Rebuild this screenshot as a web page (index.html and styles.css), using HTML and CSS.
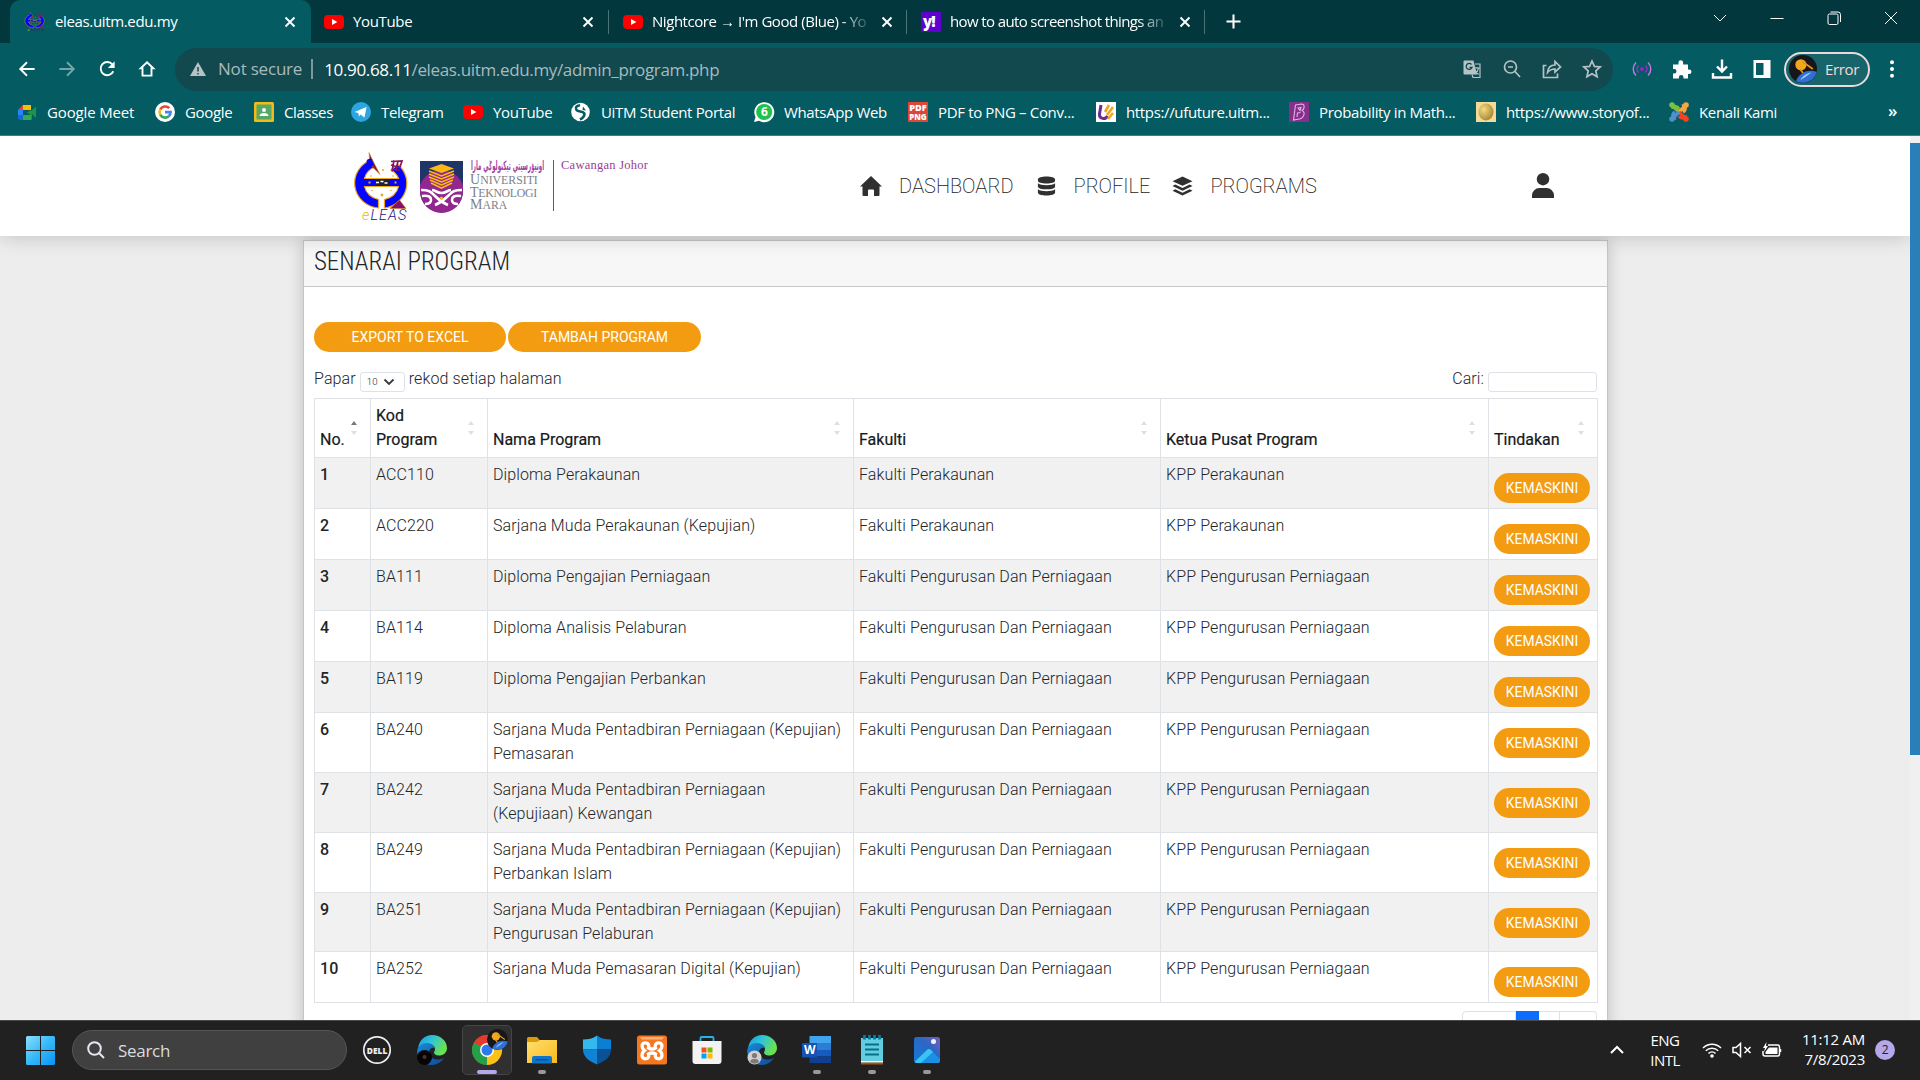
FILE: index.html
```html
<!DOCTYPE html>
<html lang="ms">
<head>
<meta charset="utf-8">
<title>eleas.uitm.edu.my</title>
<link rel="stylesheet" href="styles.css">
</head>
<body>
<svg class="defs" width="0" height="0">
  <defs>
    <linearGradient id="edge-a" x1="0" y1="0" x2="1" y2=".4"><stop offset="0" stop-color="#1a9be0"/><stop offset=".5" stop-color="#2fc4d8"/><stop offset="1" stop-color="#6ae24f"/></linearGradient>
    <linearGradient id="edge-b" x1="0" y1="0" x2="1" y2="1"><stop offset="0" stop-color="#1b8ad8"/><stop offset="1" stop-color="#0c4a98"/></linearGradient>
    <linearGradient id="win" x1="0" y1="0" x2="1" y2="1"><stop offset="0" stop-color="#8be0ff"/><stop offset=".5" stop-color="#35b9f8"/><stop offset="1" stop-color="#0a93f4"/></linearGradient>
    <linearGradient id="folder" x1="0" y1="0" x2="1" y2="1"><stop offset="0" stop-color="#ffdf70"/><stop offset="1" stop-color="#fab91a"/></linearGradient>
    <linearGradient id="photo" x1="0" y1="1" x2="1" y2="0"><stop offset="0" stop-color="#1479d8"/><stop offset=".6" stop-color="#2b67c4"/><stop offset="1" stop-color="#7a5cc0"/></linearGradient>
    <radialGradient id="egg" cx=".35" cy=".35" r=".8"><stop offset="0" stop-color="#f2dc80"/><stop offset="1" stop-color="#9b7a2c"/></radialGradient>
    <symbol id="yt" viewBox="0 0 20 20"><rect y="3" width="20" height="14" rx="4" fill="#f00"/><path d="M8 7l5.4 3L8 13z" fill="#fff"/></symbol>
    <symbol id="close" viewBox="0 0 12 12"><path d="M1.5 1.5l9 9M10.500 1.500l-9 9" stroke="#fff" stroke-width="1.9" fill="none"/></symbol>
    <g id="eleas">
      <path d="M17 7.500A26 25 0 0 0 23.500 56V47.500A17.500 16.500 0 0 1 9.500 34.500H43.500A17.500 16.500 0 0 1 29.500 47.500V56A26 25 0 0 0 43 12.500L36 18A17.500 16.500 0 0 1 43.500 26.500H9.500A17.500 16.500 0 0 1 20 15z" fill="#0505ff" stroke="#f0a818" stroke-width="1.200"/>
      <path d="M14 .5l3.500 7.500L25 22.500 15 12.500z" fill="#84104e" stroke="#d69122" stroke-width=".6"/>
      <path d="M11.500 9q1-3 5-2l2 5q-1 3-4 3-3-2-3-6z" fill="#0505ff"/>
      <path d="M36 9.500l11-.5-2 6M36 13l9.500 3M36.500 17l8.500 1.500M39 8.500l-2 11M43 9l-2 9" stroke="#84145e" stroke-width="1.700" fill="none"/>
      <path d="M44.500 48l6.500 8.500H35z" fill="#82106c" stroke="#c87a20" stroke-width=".6"/>
      <rect x="20" y="27.500" width="14" height="6" fill="#223"/><path d="M21 30.500h3m1.500-1h3m1 1.500h3" stroke="#fff" stroke-width="1.600"/>
      <g fill="#e9a927"><rect x="13.500" y="29.500" width="2" height="2"/><rect x="39.500" y="29.500" width="2" height="2"/><circle cx="27" cy="43" r="1.400"/><circle cx="17" cy="38.500" r=".8"/><circle cx="36" cy="38.500" r=".8"/><circle cx="16" cy="24" r=".8"/><circle cx="28" cy="18" r="1"/><circle cx="38" cy="24" r=".8"/></g>
      <text x="7" y="68" class="eleas-name"><tspan fill="#f2b31c">e</tspan>LEAS</text>
    </g>
    <symbol id="edge" viewBox="0 0 30 30">
      <path d="M1 13C2.500 5 8 0 15 0c8.500 0 15 6 15 13 0 5-4 7.500-8 7.500-3.500 0-5-1.500-5-3 0-1 1-1.500 1-3.500 0-3-3-5-6.500-5C6 9 3 11 1 13z" fill="url(#edge-a)"/>
      <path d="M.2 16C.5 11 5 8 10 8c4 0 7 2.500 8 5-2-1-6 0-6 4.500 0 5 5 7.500 10 7 2-.2 4-1 5-1.500C24.500 27 20 30 15 30 6.500 30 0 24 .2 16z" fill="url(#edge-b)"/>
    </symbol>
    <symbol id="planet" viewBox="0 0 20 20"><circle cx="10" cy="10" r="10" fill="#17171b"/><circle cx="8.500" cy="7" r="4" fill="#f0a81c"/><path d="M10 5l7 5M8 10l2 3" stroke="#e0941a" stroke-width="1.200"/><path d="M5 18.500C7 13 13 9.500 19.800 12A10 10 0 0 1 5 18.500z" fill="#2f6fd8"/><path d="M8 18c2-3.500 5-5 8-5.500l-4 3z" fill="#9fc4f2"/></symbol>
  </defs>
</svg>

<header class="browser">
  <div class="tabs">
    <div class="tab tab-active">
      <svg class="fav" viewBox="0 0 54 70" preserveAspectRatio="none"><use href="#eleas"/></svg><span class="tab-title">eleas.uitm.edu.my</span><svg class="x"><use href="#close"/></svg>
    </div>
    <div class="tab"><svg class="fav"><use href="#yt"/></svg><span class="tab-title">YouTube</span><svg class="x"><use href="#close"/></svg></div>
    <div class="tab"><svg class="fav"><use href="#yt"/></svg><span class="tab-title fade">Nightcore → I'm Good (Blue) - Yo</span><svg class="x"><use href="#close"/></svg></div>
    <div class="tab"><svg class="fav" viewBox="0 0 20 20"><rect width="20" height="20" fill="#5f01d1"/><text x="2" y="14.500" class="yahoo">y!</text></svg><span class="tab-title fade snug">how to auto screenshot things an</span><svg class="x"><use href="#close"/></svg></div>
    <svg class="plus" viewBox="0 0 16 16"><path d="M8 .5v15M.5 8h15" stroke="#fff" stroke-width="2.200"/></svg>
    <div class="window-controls">
      <svg viewBox="0 0 14 14"><path d="M1 4l6 6 6-6" /></svg>
      <svg viewBox="0 0 14 14"><path d="M.5 7.500h13"/></svg>
      <svg viewBox="0 0 14 14"><rect x="1" y="3" width="10" height="10.500" rx="1.500"/><path d="M3.500 1h7.500a2.500 2.500 0 0 1 2.500 2.500V11"/></svg>
      <svg viewBox="0 0 14 14"><path d="M1 1l12 12M13 1L1 13"/></svg>
    </div>
  </div>

  <div class="toolbar">
    <svg class="tool" viewBox="0 0 20 20"><path d="M18.500 10H3M10 2.500L2.500 10l7.500 7.500" class="ln"/></svg>
    <svg class="tool dim" viewBox="0 0 20 20"><path d="M1.500 10H17M10 2.500l7.500 7.500-7.500 7.500" class="ln"/></svg>
    <svg class="tool" viewBox="0 0 20 20"><path d="M17 12.500A7.300 7.300 0 1 1 16 5" class="ln"/><path d="M18.500 1.500V9H11z" fill="#fff"/></svg>
    <svg class="tool" viewBox="0 0 20 20"><path d="M10 2.500l7 6.800h-2v8H5v-8H3z" class="ln"/></svg>
    <div class="omnibox">
      <svg class="warn" viewBox="0 0 16 14"><path d="M8 0l8 14H0z" fill="#b5c3c6"/><path d="M8 5v4.500M8 11v1.500" stroke="#11494f" stroke-width="1.500"/></svg>
      <span class="secure">Not secure</span>
      <span class="url"><b>10.90.68.11</b>/eleas.uitm.edu.my/admin_program.php</span>
      <div class="omni-icons">
        <svg viewBox="0 0 20 20"><path d="M2.500 1.500h9l3.500 14H2.500a1 1 0 0 1-1-1v-12a1 1 0 0 1 1-1z" fill="#b5c3c6"/><path d="M9.500 5.500A3 3 0 1 0 10 8.500H7.500" fill="none" stroke="#11494f" stroke-width="1.300"/><path d="M13 5h5v13.500h-7l-1-3M12.500 9h5M15 8v1.500M13 15c2-1.500 3-3.500 3.500-6M13 11.500l3.500 4" fill="none" stroke="#b5c3c6" stroke-width="1.200"/></svg>
        <svg viewBox="0 0 20 20"><circle cx="8.500" cy="8" r="6" class="ol"/><path d="M13 12.500l5 5.500M6 8h5" class="ol"/></svg>
        <svg viewBox="0 0 20 20"><path d="M4.500 6.500H1.500v12h14v-4" class="ol"/><path d="M5.500 13.500c.5-5 3-7.500 7.500-7.500V2.500l5.500 5.500-5.500 5v-3c-3.500 0-5.500 1-7.500 3.500z" class="ol"/></svg>
        <svg viewBox="0 0 20 20"><path d="M10 2l2.400 5.400 5.800.6-4.400 3.900 1.300 5.800L10 14.700l-5.100 3 1.300-5.800L1.800 8l5.800-.6z" class="ol"/></svg>
      </div>
    </div>
    <div class="ext">
      <svg viewBox="0 0 20 20"><g fill="none" stroke="#c67be0" stroke-width="1.400"><path d="M4 3.500a9 9 0 0 0 0 13M16 3.500a9 9 0 0 1 0 13"/><path d="M6.500 6.500a5 5 0 0 0 0 7M13.500 6.500a5 5 0 0 1 0 7" stroke="#a82fca"/></g><circle cx="10" cy="10" r="2" fill="#a020c8"/></svg>
      <svg viewBox="0 0 20 20"><path d="M1 5.500h5.500V3.500a2.300 2.300 0 0 1 4.600 0v2H16v5h1.200a2.300 2.300 0 0 1 0 4.600H16v4.400h-4.500v-1.200a2.300 2.300 0 0 0-4.600 0v1.200H1v-5h1.200a2.300 2.300 0 0 0 0-4.600H1z" fill="#fff"/></svg>
      <svg viewBox="0 0 20 20"><path d="M10 .5v11M5 7.500l5 5 5-5M1 14v4.500h18V14" fill="none" stroke="#fff" stroke-width="2.400"/></svg>
      <svg viewBox="0 0 20 20"><path fill-rule="evenodd" d="M1.500 1h17v18h-17zM4 4v12h7.500V4z" fill="#fff"/></svg>
    </div>
    <div class="profile"><svg viewBox="0 0 20 20"><use href="#planet"/></svg><span>Error</span></div>
    <svg class="dots" viewBox="0 0 4 18"><circle cx="2" cy="2.200" r="2"/><circle cx="2" cy="9" r="2"/><circle cx="2" cy="15.800" r="2"/></svg>
  </div>

  <nav class="bookmarks">
    <span class="bm"><svg viewBox="0 0 20 20"><path d="M1 8l5-5v5z" fill="#ea4335"/><path d="M6 3h8v5H6z" fill="#fbbc04"/><path d="M1 8h5v5H1z" fill="#2684fc"/><path d="M1 13h5v5H2.500L1 16.500z" fill="#1967d2"/><path d="M6 13h8v5H6z" fill="#34a853"/><path d="M14 3v5l-4 2.500 4 3V18l1-1v-5l4 4V4.500L14 9z" fill="#1e9446"/></svg>Google Meet</span>
    <span class="bm"><svg viewBox="0 0 20 20"><circle cx="10" cy="10" r="10" fill="#fff"/><g fill="none" stroke-width="2.600"><path d="M14.200 6.200A5.600 5.600 0 0 0 5.200 7.500" stroke="#ea4335"/><path d="M5.200 7.500a5.600 5.600 0 0 0 0 5.200" stroke="#fbbc05"/><path d="M5.200 12.700a5.600 5.600 0 0 0 8.600 1.600" stroke="#34a853"/><path d="M13.800 14.300a5.600 5.600 0 0 0 1.800-4.200H10" stroke="#4285f4"/></g></svg>Google</span>
    <span class="bm"><svg viewBox="0 0 20 20"><rect width="20" height="20" rx="1.500" fill="#f5ba15"/><rect x="2.500" y="2.500" width="15" height="15" fill="#57a866"/><circle cx="10" cy="8" r="2" fill="#fff"/><path d="M5.500 14c0-4 9-4 9 0z" fill="#fff"/></svg>Classes</span>
    <span class="bm"><svg viewBox="0 0 20 20"><circle cx="10" cy="10" r="10" fill="#2da5e0"/><path d="M3.500 10L15.500 5l-2 10.500-4-3-1.500 2-.8-3.500z" fill="#fff"/></svg>Telegram</span>
    <span class="bm"><svg><use href="#yt"/></svg>YouTube</span>
    <span class="bm"><svg viewBox="0 0 20 20"><circle cx="9.500" cy="10" r="9.300" fill="#fff"/><path d="M9 3.500C5.500 3 4 6 5.500 8s6 1 7.500 3-1 5-4 6.500" fill="none" stroke="#045b62" stroke-width="2.600"/><path d="M12 4.500l3 4-3.500-.5z" fill="#045b62"/></svg>UiTM Student Portal</span>
    <span class="bm"><svg viewBox="0 0 20 20"><path d="M0 20l1.500-5A10 10 0 1 1 5 18.700z" fill="#fff"/><circle cx="10.200" cy="10" r="8" fill="#1fc24a"/><text x="7" y="14.300" class="six">6</text></svg>WhatsApp Web</span>
    <span class="bm"><svg viewBox="0 0 20 20"><rect width="20" height="20" fill="#d9483b"/><text x="1.200" y="8.500" textLength="17.500" lengthAdjust="spacingAndGlyphs" class="pdf">PDF</text><text x="1.200" y="18" textLength="17.500" lengthAdjust="spacingAndGlyphs" class="pdf">PNG</text></svg>PDF to PNG – Conv...</span>
    <span class="bm"><svg viewBox="0 0 20 20"><rect width="20" height="20" fill="#fff"/><path d="M5 3L3.500 12c-.6 5 6 6 8 2" fill="none" stroke="#6b2d91" stroke-width="3"/><path d="M9 10l4-7M11 13l6-8M12 17l5-6" stroke="#f0a71e" stroke-width="2.600"/></svg>https://ufuture.uitm...</span>
    <span class="bm"><svg viewBox="0 0 20 20"><rect width="20" height="20" fill="#86308c"/><path d="M6.500 3l6-1c4 0 3 6 0 6.500 5 1 2 8-2 8.500l-6 1zM9 6l3-.5-1 3zM8 15l.5-4 3-.5" fill="none" stroke="#e3b4e6" stroke-width="1.100"/></svg>Probability in Math...</span>
    <span class="bm"><svg viewBox="0 0 20 20"><rect width="20" height="20" fill="#f4d999"/><ellipse cx="10" cy="10" rx="7.500" ry="8.500" fill="url(#egg)"/></svg>https://www.storyof...</span>
    <span class="bm"><svg viewBox="0 0 20 20"><g fill="none" stroke-width="3.400"><path d="M3 3l7 7" stroke="#7ac143"/><path d="M4 7c0-4 4-3 6 0" stroke="#7ac143"/><path d="M17 3l-7 7" stroke="#f9a541"/><path d="M13 4c4-1 4 4 1 6" stroke="#f9a541"/><path d="M17 17l-7-7" stroke="#f44321"/><path d="M16 13c1 4-4 4-6 1" stroke="#f44321"/><path d="M3 17l7-7" stroke="#5091cd"/><path d="M7 16c-4 1-4-4-1-6" stroke="#5091cd"/></g><g><circle cx="3" cy="3" r="2.800" fill="#7ac143"/><circle cx="17" cy="3" r="2.800" fill="#f9a541"/><circle cx="17" cy="17" r="2.800" fill="#f44321"/><circle cx="3" cy="17" r="2.800" fill="#5091cd"/></g></svg>Kenali Kami</span>
    <span class="more">»</span>
  </nav>
</header>

<div class="viewport">
  <div class="page">
    <div class="navbar">
      <div class="brand">
        <div class="eleas"><svg viewBox="0 0 54 70" width="54" height="70"><use href="#eleas"/></svg></div>
        <svg class="crest" viewBox="0 0 43 52"><path d="M0 0h43v30a21.500 21.500 0 0 1-43 0z" fill="#1f3567"/><path d="M2 20a21.500 19 0 0 1 39 0l2 4v6a21.500 22 0 0 1-43 0v-6z" fill="#92278f"/><path d="M21.500 3L34 7.500 21.500 12 9 7.500z" fill="#fdb913"/><path d="M9 10l12.500 5L34 10M9 13l12.500 5L34 13M9 16l12.500 5L34 16M10 19l11.500 5L33 19M11 22l10.500 5L32 22" fill="none" stroke="#fdb913" stroke-width="1.600"/><path d="M1 29c9 0 10 2 14 6s8 7 13 9M42 29c-9 0-10 2-14 6s-8 7-13 9M2 35c7-1 9 1 9 4s-3 4-6 4M41 35c-7-1-9 1-9 4s3 4 6 4M12 29c3 0 5 3 9.500 3s6.500-3 9.500-3" fill="none" stroke="#fff" stroke-width="2.600"/><circle cx="21.500" cy="37" r="1.500" fill="#fdb913"/></svg>
        <div class="uitm">
          <svg viewBox="0 0 76 13" width="76" height="13"><text x="1" y="9.500" textLength="73" lengthAdjust="spacingAndGlyphs" class="jawi">اونيۏرسيتي تيكنولوݢي مارا</text></svg>
          <span class="u1">UNIVERSITI</span><span class="u2">TEKNOLOGI</span><span class="u3">MARA</span>
        </div>
        <div class="branch">Cawangan Johor</div>
      </div>
      <div class="menu">
        <a><svg viewBox="0 0 22 20"><path d="M11 0l11 10.500h-2.500V19a1 1 0 0 1-1 1H14v-5.500a1 1 0 0 0-1-1H9a1 1 0 0 0-1 1V20H3.500a1 1 0 0 1-1-1v-8.500H0z"/></svg>DASHBOARD</a>
        <a><svg viewBox="0 0 22 20"><path d="M2 3.200C2 1 6 0 11 0s9 1 9 3.200v1C20 6.500 16 7.300 11 7.300S2 6.500 2 4.200zM2 7.200c2 1.500 5 2 9 2s7-.5 9-2v3.300c0 2-4 3-9 3s-9-1-9-3zM2 13.500c2 1.500 5 2 9 2s7-.5 9-2v3.300c0 2-4 3.200-9 3.200s-9-1-9-3.200z"/></svg>PROFILE</a>
        <a><svg viewBox="0 0 22 20"><path d="M11 0l10.500 5L11 9.800.5 5zM3.500 8.500L11 12l7.500-3.500 3 1.500L11 15 .5 10zM3.500 13.500L11 17l7.500-3.500 3 1.500L11 20 .5 15z"/></svg>PROGRAMS</a>
      </div>
      <svg class="user" viewBox="0 0 22 25"><circle cx="11" cy="6.200" r="6.200"/><path d="M0 25v-2.500a7.500 7.500 0 0 1 7.500-7.500h7A7.500 7.500 0 0 1 22 22.500V25z"/></svg>
    </div>

    <section class="card">
      <h1>SENARAI PROGRAM</h1>
      <div class="card-body">
        <div class="actions"><button class="btn">EXPORT TO EXCEL</button><button class="btn">TAMBAH PROGRAM</button></div>
        <div class="controls">
          <label>Papar <span class="select">10<svg viewBox="0 0 12 8"><path d="M1.500 1.500L6 6l4.500-4.500"/></svg></span> rekod setiap halaman</label>
          <label>Cari: <span class="input"></span></label>
        </div>
        <table>
          <colgroup><col class="c1"><col class="c2"><col class="c3"><col class="c4"><col class="c5"><col class="c6"></colgroup>
          <thead><tr>
            <th class="asc">No.</th><th>Kod<br>Program</th><th>Nama Program</th><th>Fakulti</th><th>Ketua Pusat Program</th><th>Tindakan</th>
          </tr></thead>
          <tbody>
            <tr><th>1</th><td>ACC110</td><td>Diploma Perakaunan</td><td>Fakulti Perakaunan</td><td>KPP Perakaunan</td><td><button class="btn sm">KEMASKINI</button></td></tr>
            <tr><th>2</th><td>ACC220</td><td>Sarjana Muda Perakaunan (Kepujian)</td><td>Fakulti Perakaunan</td><td>KPP Perakaunan</td><td><button class="btn sm">KEMASKINI</button></td></tr>
            <tr><th>3</th><td>BA111</td><td>Diploma Pengajian Perniagaan</td><td>Fakulti Pengurusan Dan Perniagaan</td><td>KPP Pengurusan Perniagaan</td><td><button class="btn sm">KEMASKINI</button></td></tr>
            <tr><th>4</th><td>BA114</td><td>Diploma Analisis Pelaburan</td><td>Fakulti Pengurusan Dan Perniagaan</td><td>KPP Pengurusan Perniagaan</td><td><button class="btn sm">KEMASKINI</button></td></tr>
            <tr><th>5</th><td>BA119</td><td>Diploma Pengajian Perbankan</td><td>Fakulti Pengurusan Dan Perniagaan</td><td>KPP Pengurusan Perniagaan</td><td><button class="btn sm">KEMASKINI</button></td></tr>
            <tr class="tall"><th>6</th><td>BA240</td><td>Sarjana Muda Pentadbiran Perniagaan (Kepujian) Pemasaran</td><td>Fakulti Pengurusan Dan Perniagaan</td><td>KPP Pengurusan Perniagaan</td><td><button class="btn sm">KEMASKINI</button></td></tr>
            <tr class="tall"><th>7</th><td>BA242</td><td>Sarjana Muda Pentadbiran Perniagaan (Kepujiaan) Kewangan</td><td>Fakulti Pengurusan Dan Perniagaan</td><td>KPP Pengurusan Perniagaan</td><td><button class="btn sm">KEMASKINI</button></td></tr>
            <tr class="tall"><th>8</th><td>BA249</td><td>Sarjana Muda Pentadbiran Perniagaan (Kepujian) Perbankan Islam</td><td>Fakulti Pengurusan Dan Perniagaan</td><td>KPP Pengurusan Perniagaan</td><td><button class="btn sm">KEMASKINI</button></td></tr>
            <tr class="tall last-tall"><th>9</th><td>BA251</td><td>Sarjana Muda Pentadbiran Perniagaan (Kepujian) Pengurusan Pelaburan</td><td>Fakulti Pengurusan Dan Perniagaan</td><td>KPP Pengurusan Perniagaan</td><td><button class="btn sm">KEMASKINI</button></td></tr>
            <tr><th>10</th><td>BA252</td><td>Sarjana Muda Pemasaran Digital (Kepujian)</td><td>Fakulti Pengurusan Dan Perniagaan</td><td>KPP Pengurusan Perniagaan</td><td><button class="btn sm">KEMASKINI</button></td></tr>
          </tbody>
        </table>
        <div class="pager"><span></span><span class="on"></span><span></span><span></span></div>
      </div>
    </section>
  </div>
  <div class="scroll"><div class="thumb"></div></div>
</div>

<footer class="taskbar">
  <svg class="start" viewBox="0 0 29 29"><path d="M0 1.500A1.500 1.500 0 0 1 1.500 0H14v14H0zM15 0h12.500A1.500 1.500 0 0 1 29 1.500V14H15zM0 15h14v14H1.500A1.500 1.500 0 0 1 0 27.500zM15 15h14v12.500a1.500 1.500 0 0 1-1.500 1.500H15z" fill="url(#win)"/></svg>
  <div class="search"><svg viewBox="0 0 18 18"><circle cx="7.500" cy="7.500" r="6.300"/><path d="M12 12l5 5"/></svg>Search</div>
  <div class="apps">
    <span><svg viewBox="0 0 30 30"><circle cx="15" cy="15" r="13.200" fill="none" stroke="#eee" stroke-width="1.700"/><text x="4.800" y="18.600" textLength="20.500" lengthAdjust="spacingAndGlyphs" class="dell">DELL</text></svg></span>
    <span><svg viewBox="0 0 30 30"><use href="#edge"/><circle cx="7.500" cy="22.500" r="7.500" fill="#070606"/><circle cx="7.500" cy="22" r="2" fill="#50302a"/></svg></span>
    <span class="app-active"><svg viewBox="0 0 30 30"><circle cx="15" cy="15" r="15" fill="#e33b2e"/><path d="M15 15L2 7.500A15 15 0 0 0 15 30l6.500-11z" fill="#24a148"/><path d="M15 15v15A15 15 0 0 0 28 7.500H15z" fill="#fbc116"/><path d="M2 7.500A15 15 0 0 1 28 7.500H15z" fill="#e33b2e"/><circle cx="15" cy="15" r="7" fill="#fff"/><circle cx="15" cy="15" r="5.500" fill="#2f78ee"/></svg><svg class="overlay" viewBox="0 0 20 20"><use href="#planet"/></svg></span>
    <span class="run"><svg viewBox="0 0 30 30"><path d="M0 3.500A1.500 1.500 0 0 1 1.500 2H10l3 3.500V10H0z" fill="#dc9a08"/><path d="M0 7h10l3-2h17v23H0z" fill="url(#folder)"/><path d="M5 28.500V23a2 2 0 0 1 2-2h16a2 2 0 0 1 2 2v5.500z" fill="#0f74cc"/><path d="M8.500 24.800h13" stroke="#064d92" stroke-width="1.200"/></svg></span>
    <span><svg viewBox="0 0 30 30"><path d="M15 .5c4 3 9 4 14 4v10H15z" fill="#0c7fd4"/><path d="M15 .5c-4 3-9 4-14 4v10h14z" fill="#35b8ee"/><path d="M1 14.500h14v15C6 26 1 21 1 14.500z" fill="#1183d6"/><path d="M29 14.500H15v15C24 26 29 21 29 14.500z" fill="#0a5298"/></svg></span>
    <span><svg viewBox="0 0 30 30"><rect y=".5" width="30" height="29" rx="2.500" fill="#f5761f"/><path d="M3 2h24l-2 2.500H5z" fill="#fbb27c"/><path d="M11.500 12.500Q15 14.500 18.500 12.500C16.500 6.500 25 5.500 25 10.500Q25 13 22.500 15Q25 17 25 20C25 25 16.500 24 18.500 18.500Q15 16.500 11.500 18.500C13.500 24 5 25 5 20Q5 17 7.500 15Q5 13 5 10.500C5 5.500 13.500 6.500 11.500 12.500z" transform="translate(0 .5)" fill="none" stroke="#fff" stroke-width="3.300"/></svg></span>
    <span><svg viewBox="0 0 30 30"><path d="M8.500 7V3a1 1 0 0 1 1-1h11a1 1 0 0 1 1 1v4" fill="none" stroke="#22b4e8" stroke-width="1.800"/><path d="M.5 6h29v20a3 3 0 0 1-3 3h-23a3 3 0 0 1-3-3z" fill="#f3f3f3"/><path d="M9.500 12.500h5v5h-5z" fill="#f25022"/><path d="M15.500 12.500h5v5h-5z" fill="#7fba00"/><path d="M9.500 18.500h5v5h-5z" fill="#00a4ef"/><path d="M15.500 18.500h5v5h-5z" fill="#ffb900"/></svg></span>
    <span><svg viewBox="0 0 30 30"><use href="#edge"/><circle cx="7.500" cy="22.500" r="7" fill="#d2d0ce"/><circle cx="7.500" cy="20.500" r="2.600" fill="#7e7c7b"/><path d="M3 27c0-4.500 9-4.500 9 0a7 7 0 0 1-9 0z" fill="#7e7c7b"/></svg></span>
    <span class="run"><svg viewBox="0 0 30 30"><path d="M7.500 1H29v7H7.500z" fill="#41a5ee"/><path d="M7.500 8H29v7H7.500z" fill="#2b7cd3"/><path d="M7.500 15H29v6.500H7.500z" fill="#185abd"/><path d="M7.500 21.500H29V28H7.500z" fill="#103f91"/><rect y="8" width="15" height="14.500" rx="1" fill="#1553b5"/><text x="2" y="19" class="word">W</text></svg></span>
    <span class="run"><svg viewBox="0 0 30 30"><path d="M4 3h22v25H4z" fill="#62cde0"/><path d="M4 26h22v1.500H4z" fill="#fff"/><path d="M4 27.500h22v2H4z" fill="#b3500f"/><path d="M8 9.500h14M8 14.500h14M8 19.500h14" stroke="#04708a" stroke-width="1.800"/><path d="M7.500 0v4.500M12.500 0v4.500M17.500 0v4.500M22.500 0v4.500" stroke="#07799a" stroke-width="2.800"/></svg></span>
    <span class="run"><svg viewBox="0 0 30 30"><rect x="2" y="2" width="26" height="26" rx="2.500" fill="url(#photo)"/><path d="M3 26.500l12-11.500q2-2 4 0l9 9v2a2 2 0 0 1-2 2H5q-1.500 0-2-1.500z" fill="#1b8fe4"/><path d="M3 26.500l12-11.500q2-2 4 0l2 2L9 28H5q-1.500 0-2-1.500z" fill="#38c4f4"/><circle cx="21.500" cy="6.500" r="2.500" fill="#f2f2ff"/></svg></span>
  </div>
  <div class="tray">
    <svg class="chev" viewBox="0 0 14 8"><path d="M1 7l6-6 6 6"/></svg>
    <div class="lang">ENG<br>INTL</div>
    <svg class="wifi" viewBox="0 0 20 16"><path d="M1 6a12.700 12.700 0 0 1 18 0M3.800 8.800a8.700 8.700 0 0 1 12.400 0M6.500 11.500a5 5 0 0 1 7 0"/><circle cx="10" cy="14" r="1.800" fill="#fff" stroke="none"/></svg>
    <svg class="vol" viewBox="0 0 20 16"><path d="M1 5.500v5h3l4.500 4V1.500L4 5.500zM12.500 5l6 6M18.500 5l-6 6"/></svg>
    <svg class="bat" viewBox="0 0 20 16"><path d="M6 3h9.500A2 2 0 0 1 17.500 5v7a2 2 0 0 1-2 2H3a2 2 0 0 1-2-2V9M18.500 7v3"/><path d="M7 5.500h8.500v6.500h-12V10z" fill="#fff" stroke="none"/><path d="M4.500 0L1 6h2l-1 4 4-6H4z" fill="#fff" stroke="none"/></svg>
    <div class="clock">11:12 AM<br>7/8/2023</div>
    <div class="badge">2</div>
  </div>
</footer>
</body>
</html>
```
FILE: styles.css
```css
* { box-sizing: border-box; }
body {
  margin: 0;
  width: 1920px;
  height: 1080px;
  overflow: hidden;
  display: flex;
  flex-direction: column;
  font-family: "Open Sans", sans-serif;
  color: #212529;
}
.defs { position: absolute; }
svg { flex: none; overflow: visible; }

/* browser chrome */
.browser {
  height: 136px;
  flex: none;
  background: #045b62;
  border-bottom: 1px solid #39828a;
  color: #fff;
  font-size: 15px;
  letter-spacing: -0.35px;
}
.tabs {
  height: 43px;
  background: #02383d;
  display: flex;
  align-items: center;
  padding-left: 10px;
}
.tab {
  width: 298px;
  height: 24px;
  padding: 0 10px 0 14px;
  display: flex;
  align-items: center;
  border-right: 1px solid #4a7478;
}
.tab-active {
  width: 301px;
  height: 43px;
  padding: 0 15px;
  background: #045b62;
  border-right: 0;
  border-radius: 10px 10px 0 0;
}
.tab:nth-child(2) { padding-left: 13px; }
.tab .fav { width: 20px; height: 20px; margin-right: 9px; }
.tab-active .fav { margin-right: 10px; }
.tab-title { width: 214px; white-space: nowrap; margin-right: 15px; padding-bottom: 2px; }
.tab-active .tab-title { width: 218px; margin-right: 11px; }
.fade {
  letter-spacing: -0.45px;
  -webkit-mask-image: linear-gradient(90deg, #000 88%, transparent 103%);
  mask-image: linear-gradient(90deg, #000 88%, transparent 103%);
}
.fade.snug { letter-spacing: -0.62px; }
.tab .x { width: 12px; height: 12px; }
.yahoo { font: 900 15px "Open Sans", sans-serif; fill: #fff; letter-spacing: -1px; }
.plus { width: 15px; height: 15px; margin-left: 21px; }
.window-controls { margin-left: auto; display: flex; gap: 43px; padding: 0 22px 7px 0; }
.window-controls svg { width: 14px; height: 14px; fill: none; stroke: #fff; stroke-width: 1; }

.toolbar {
  height: 52px;
  display: flex;
  align-items: center;
  padding-left: 18px;
}
.tool { width: 18px; height: 20px; margin-right: 22px; }
.tool:nth-child(4) { margin-right: 19px; }
.ln { fill: none; stroke: #fff; stroke-width: 2.1; }
.dim { opacity: .45; }
.omnibox {
  width: 1438px;
  height: 43px;
  border-radius: 22px;
  background: #11494f;
  display: flex;
  align-items: center;
  padding: 0 11px 0 15px;
  font-size: 17px;
  color: #a9babd;
}
.warn { width: 16px; height: 14px; }
.secure { margin-left: 12px; letter-spacing: -0.2px; padding-right: 9px; border-right: 2px solid #7d999c; line-height: 20px; white-space: nowrap; }
.url { margin-left: 11px; }
.url b { font-weight: 400; color: #fff; }
.omni-icons { margin-left: auto; display: flex; gap: 20px; }
.omni-icons svg { width: 20px; height: 20px; }
.ol { fill: none; stroke: #b5c3c6; stroke-width: 1.7; }
.ext { display: flex; gap: 20px; margin: 0 12px 0 19px; }
.ext svg { width: 20px; height: 20px; }
.profile {
  width: 86px;
  height: 35px;
  border: 2px solid #ecd9d9;
  border-radius: 18px;
  background: #17656b;
  display: flex;
  align-items: center;
  gap: 8px;
  padding-left: 3px;
  color: #f4dad9;
}
.profile span { padding-bottom: 1px; }
.profile svg { width: 28px; height: 28px; }
.dots { width: 4px; height: 18px; fill: #fff; margin-left: 20px; }

.bookmarks {
  height: 34px;
  padding-left: 17px;
  display: grid;
  grid-template-columns: 138px 99px 97px 112px 108px 183px 154px 188px 193px 187px 193px 219px 30px;
  align-items: center;
}
.bm { display: flex; align-items: center; gap: 10px; white-space: nowrap; }
.bm svg { width: 20px; height: 20px; }
.bm:nth-child(1) { letter-spacing: -0.15px; }
.more { font-size: 17px; padding-bottom: 3px; font-weight: 600; }
.six { font: 700 12px "Open Sans", sans-serif; fill: #fff; }
.pdf { font: 800 8.500px/1 "Open Sans", sans-serif; fill: #fff; letter-spacing: 0; }

/* page */
.viewport { height: 884px; display: flex; overflow: hidden; }
.page {
  width: 1910px;
  background: #ededed;
  font-family: Roboto, sans-serif;
  display: flex;
  flex-direction: column;
  align-items: flex-start;
}
.scroll { width: 10px; padding-top: 7px; background: #f0f0f0; }
.thumb { height: 612px; background: #2980b9; }
.navbar {
  width: 100%;
  height: 100px;
  flex: none;
  background: #fff;
  box-shadow: 0 0 20px rgba(0, 0, 0, .2);
  clip-path: inset(0 0 -30px 0);
  position: relative;
  z-index: 1;
  display: flex;
  align-items: center;
  padding-left: 355px;
}
.brand { display: flex; align-items: flex-start; height: 70px; width: 505px; padding-top: 1px; }
.eleas { height: 70px; }
.eleas-name { font: italic 300 14.500px Roboto, sans-serif; letter-spacing: 1.1px; fill: #1c1480; }
.crest { width: 43px; height: 52px; margin: 9px 0 0 11px; }
.uitm {
  width: 84px;
  height: 51px;
  margin: 8px 0 0 7px;
  border-right: 1px solid #5c5f63;
  display: flex;
  flex-direction: column;
  font: 11.800px/12.5px "Liberation Serif", serif;
  color: #7d8287;
}
.uitm svg { margin-bottom: 1px; }
.uitm span { display: block; height: 12.5px; }
.uitm span::first-letter { font-size: 14px; line-height: 12.5px; }
.jawi { font: 700 13px "DejaVu Sans", sans-serif; fill: #a1419c; }
.u1 { letter-spacing: 0; }
.u2 { letter-spacing: -0.3px; }
.branch { margin: 6px 0 0 7px; font: 12.500px/15px "Liberation Serif", serif; letter-spacing: .25px; color: #9b3c97; white-space: nowrap; }
.menu { display: flex; font-size: 20px; font-weight: 200; color: #212121; }
.menu a { display: flex; align-items: center; gap: 17px; margin-right: 22px; }
.menu svg { width: 22px; height: 20px; fill: #303030; }
.menu a:nth-child(n+2) svg { width: 21px; }
.user { width: 22px; height: 25px; fill: #303030; margin-left: 193px; margin-bottom: 1px; }

.card {
  width: 1305px;
  margin: 4px 0 0 303px;
  height: 860px;
  flex: none;
  background: #fff;
  border: 1px solid #c5c5c5;
  box-shadow: 0 0 15px rgba(0, 0, 0, .2);
}
h1 {
  margin: 0;
  height: 46px;
  background: #f7f7f7;
  border-bottom: 1px solid #c8c8c8;
  padding-left: 10px;
  font: 300 24.9px/41px Roboto, sans-serif;
  font-stretch: 75%;
}
.card-body { padding: 35px 10px 0; font-size: 16px; font-weight: 300; letter-spacing: .11px; line-height: 24px; }
.actions { display: flex; gap: 2px; }
.btn {
  width: 192px;
  height: 30px;
  padding: 0;
  border: 0;
  border-radius: 15px;
  background: #f39c12;
  color: #fff;
  font: 370 14px Roboto, sans-serif;
}
.btn:nth-child(2) { width: 193px; }
.controls { display: flex; justify-content: space-between; margin: 15px 0 7px; height: 24px; }
.controls label { display: flex; gap: 4px; }
.select, .input { margin-top: 5px; height: 20px; border: 1px solid #dee2e6; border-radius: 3px; }
.select { width: 45px; padding-left: 6px; display: flex; align-items: center; gap: 5px; font-size: 9.6px; line-height: 18px; }
.select svg { width: 12px; height: 8px; fill: none; stroke: #343a40; stroke-width: 1.8; }
.input { width: 109px; }
table { width: 1284px; table-layout: fixed; border-collapse: collapse; }
.c1 { width: 56px; } .c2 { width: 117px; } .c3 { width: 366px; } .c4 { width: 307px; } .c5 { width: 328px; } .c6 { width: 109px; }
th, td { border: 1px solid #dee2e6; padding: 5px 5px 0; vertical-align: top; text-align: left; }
tbody th { font-weight: 500; }
thead th { height: 59px; vertical-align: bottom; padding: 0 5px 5px; font-weight: 400; letter-spacing: 0; color: #16191c; position: relative; -webkit-text-stroke: .2px #16191c; }
thead th::before, thead th::after {
  content: "";
  position: absolute;
  right: 13px;
  border: 3px solid transparent;
}
thead th::before { top: 22px; border-top: 0; border-bottom: 4px solid #dfdfdf; }
thead th::after { top: 32px; border-bottom: 0; border-top: 4px solid #dfdfdf; }
thead .asc::before { border-bottom-color: #777; }
tbody tr { height: 51px; }
tbody .tall { height: 60px; }
tbody .last-tall { height: 59px; }
tbody tr:nth-child(odd) { background: #f1f1f1; }
.btn.sm { display: block; width: 96px; margin-top: 10px; font-size: 13.9px; }
.pager { display: flex; justify-content: flex-end; margin-top: 8px; }
.pager span { height: 36px; border: 1px solid #dee2e6; border-left: 0; width: 21px; }
.pager span:first-child { width: 54px; border-left: 1px solid #dee2e6; border-radius: 4px 0 0 0; }
.pager .on { width: 23px; background: #0d6efd; border-color: #0d6efd; }
.pager span:last-child { width: 37px; border-radius: 0 4px 0 0; }

/* taskbar */
.taskbar {
  height: 60px;
  flex: none;
  background: #212121;
  border-top: 1px solid #4a4a4a;
  display: flex;
  align-items: center;
  color: #fff;
  padding: 0 0 1px 26px;
}
.start { width: 29px; height: 29px; }
.search {
  width: 275px;
  height: 40px;
  margin-left: 17px;
  border: 1px solid #555;
  border-radius: 20px;
  background: #404040;
  display: flex;
  align-items: center;
  gap: 13px;
  padding-left: 14px;
  font-size: 17px;
  letter-spacing: -0.3px;
  color: #dcdcdc;
}
.search svg { width: 18px; height: 18px; fill: none; stroke: #e4e8ee; stroke-width: 2; }
.apps { display: flex; margin-left: 2px; }
.apps span { width: 55px; height: 50px; display: flex; align-items: center; justify-content: center; position: relative; }
.apps svg { width: 30px; height: 30px; }
.app-active::before {
  content: "";
  position: absolute;
  inset: 0 2px 0 3px;
  border: 1px solid #454545;
  border-radius: 5px;
  background: #303030;
}
.app-active svg { position: relative; }
.app-active svg.overlay { position: absolute; width: 21px; height: 21px; top: 4px; left: 28px; }
.app-active::after, .run::after {
  content: "";
  position: absolute;
  bottom: 1px;
  width: 20px;
  height: 4px;
  border-radius: 2px;
  background: #b4a7ea;
}
.run::after { width: 8px; background: #999; }
.dell { font: 800 9px "Open Sans", sans-serif; fill: #eee; }
.word { font: 700 12px "Open Sans", sans-serif; fill: #fff; }
.tray { margin-left: auto; display: flex; align-items: center; font-size: 15px; line-height: 20px; letter-spacing: -0.25px; }
.tray svg { fill: none; stroke: #fff; stroke-width: 1.500; }
.chev { width: 14px; height: 8px; }
.tray .chev { stroke-width: 2; }
.lang { margin-left: 18px; width: 46px; text-align: center; letter-spacing: -0.5px; padding-bottom: 1px; }
.wifi { width: 20px; height: 16px; margin-left: 14px; }
.vol, .bat { width: 20px; height: 16px; margin-left: 10px; }
.clock { width: 75px; margin-left: 8px; text-align: right; padding-bottom: 2px; }
.badge {
  width: 20px;
  height: 20px;
  margin: 0 25px 0 10px;
  border-radius: 10px;
  background: #b4a7ea;
  color: #222;
  font-size: 12px;
  text-align: center;
}
```
